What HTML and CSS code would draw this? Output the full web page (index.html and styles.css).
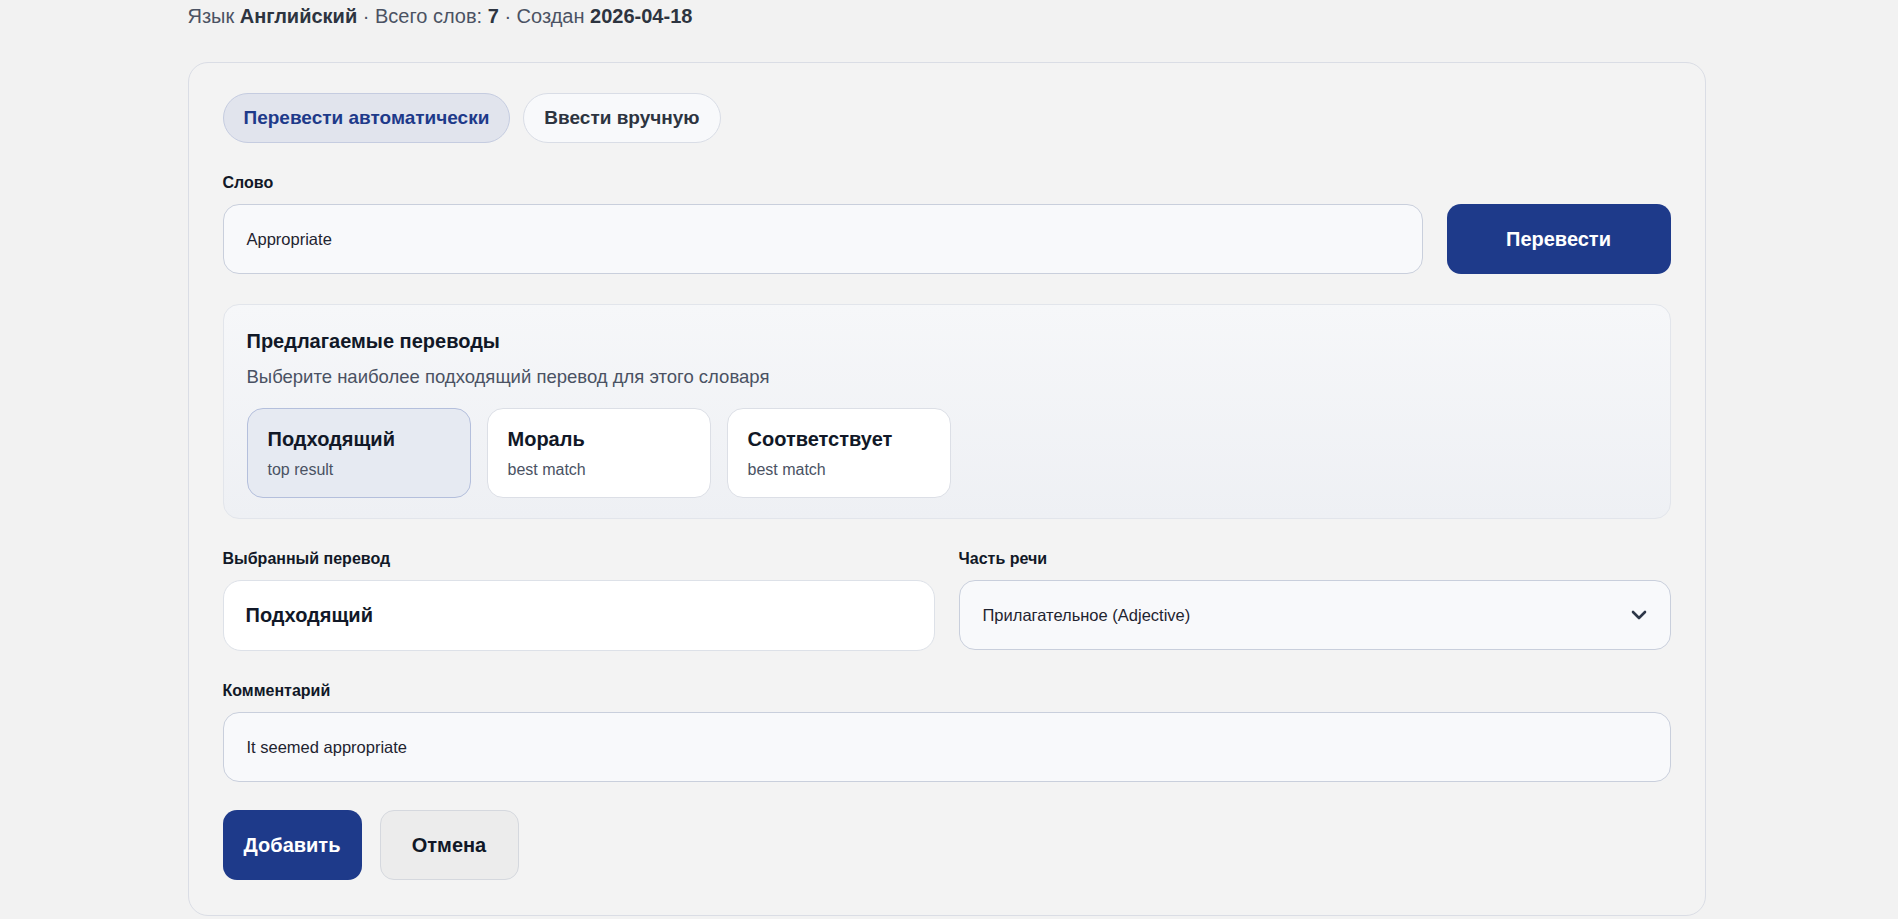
FILE: index.html
```html
<!DOCTYPE html>
<html>
	<head>
		<meta http-equiv="content-type" content="text/html; charset=utf-8" />

		<link rel="stylesheet" href="styles.css">
	</head>

	<body>
		<div class="page">
			<p class="dict-meta">
				Язык <b>Английский</b> · Всего слов: <b>7</b> · Создан <b>2026-04-18</b>
			</p>

			<form class="word-card">
				<div class="mode-tabs">
					<button type="button" class="mode-tab active">Перевести автоматически</button>
					<button type="button" class="mode-tab">Ввести вручную</button>
				</div>

				<div class="field">
					<label class="field-label">Слово</label>
					<div class="word-row">
						<div class="text-input word-input">Appropriate</div>
						<button type="button" class="btn btn-primary btn-translate">Перевести</button>
					</div>
				</div>

				<div class="suggestions">
					<h3 class="suggestions-title">Предлагаемые переводы</h3>
					<p class="suggestions-hint">Выберите наиболее подходящий перевод для этого словаря</p>
					<div class="suggestion-list">
						<div class="suggestion selected">
							<div class="suggestion-word">Подходящий</div>
							<div class="suggestion-note">top result</div>
						</div>
						<div class="suggestion">
							<div class="suggestion-word">Мораль</div>
							<div class="suggestion-note">best match</div>
						</div>
						<div class="suggestion">
							<div class="suggestion-word">Соответствует</div>
							<div class="suggestion-note">best match</div>
						</div>
					</div>
				</div>

				<div class="field-row">
					<div class="field">
						<label class="field-label">Выбранный перевод</label>
						<div class="chosen-input">Подходящий</div>
					</div>
					<div class="field">
						<label class="field-label">Часть речи</label>
						<div class="text-input select-input">
							<span>Прилагательное (Adjective)</span>
							<svg class="chevron" width="16" height="10" viewBox="0 0 16 10">
								<polyline points="2,2 8,8 14,2" fill="none" stroke="#2d3748" stroke-width="2.6" stroke-linecap="round" stroke-linejoin="round" />
							</svg>
						</div>
					</div>
				</div>

				<div class="field">
					<label class="field-label">Комментарий</label>
					<div class="text-input">It seemed appropriate</div>
				</div>

				<div class="form-actions">
					<button type="button" class="btn btn-primary">Добавить</button>
					<button type="button" class="btn btn-secondary">Отмена</button>
				</div>
			</form>
		</div>
	</body>
</html>
```

FILE: styles.css
```css
body {
	margin: 0;
	padding-right: 5px;
	background: #f2f2f2;
	font-family: "Liberation Sans", Arial, sans-serif;
	color: #111827;
}

.page {
	max-width: 1518px;
	margin: 0 auto;
}

.dict-meta {
	margin: 0;
	padding-top: 2px;
	font-size: 20px;
	line-height: 28px;
	color: #4b5263;
}

.dict-meta b {
	color: #2d3440;
}

.word-card {
	margin-top: 32px;
	padding: 30px 34px 35px;
	border: 1px solid #dadde5;
	border-radius: 20px;
	background: #f3f3f3;
	display: flex;
	flex-direction: column;
	gap: 30px;
}

.mode-tabs {
	display: flex;
	gap: 13px;
}

.mode-tab {
	height: 50px;
	padding: 0 20px;
	border: 1px solid #d9dde6;
	border-radius: 25px;
	background: #f8f9fb;
	font-family: inherit;
	font-size: 19px;
	font-weight: bold;
	color: #2d3440;
}

.mode-tab.active {
	background: #e1e4ed;
	border-color: #c5cce0;
	color: #1e3a8a;
}

.field {
	display: flex;
	flex-direction: column;
}

.field-label {
	font-size: 16px;
	line-height: 19px;
	font-weight: bold;
	margin-bottom: 12px;
}

.word-row {
	display: flex;
	gap: 24px;
}

.text-input {
	height: 70px;
	box-sizing: border-box;
	padding: 0 23px;
	border: 1px solid #c9cfdc;
	border-radius: 16px;
	background: #f8f9fb;
	display: flex;
	align-items: center;
	font-size: 16.5px;
	color: #1f2430;
}

.word-input {
	flex: 1;
}

.btn {
	height: 70px;
	width: 139px;
	padding: 0;
	border: 1px solid transparent;
	border-radius: 14px;
	font-family: inherit;
	font-size: 20px;
	font-weight: bold;
}

.btn-primary {
	background: #1e3a8a;
	color: #ffffff;
}

.btn-secondary {
	background: #ececec;
	border-color: #d5d8de;
	color: #111827;
}

.btn-translate {
	width: 224px;
}

.suggestions {
	padding: 25px 23px 20px;
	border: 1px solid #e2e5eb;
	border-radius: 16px;
	background: linear-gradient(#f6f7f9, #eef0f4);
}

.suggestions-title {
	margin: 0;
	font-size: 20px;
	line-height: 22px;
}

.suggestions-hint {
	margin: 14px 0 0;
	font-size: 18.5px;
	line-height: 22px;
	color: #4a5263;
}

.suggestion-list {
	display: flex;
	gap: 16px;
	margin-top: 20px;
}

.suggestion {
	width: 224px;
	box-sizing: border-box;
	padding: 19px 20px 17px;
	border: 1px solid #dcdfe6;
	border-radius: 16px;
	background: #ffffff;
}

.suggestion.selected {
	background: #e6eaf2;
	border-color: #b4bfdc;
}

.suggestion-word {
	font-size: 20px;
	line-height: 22px;
	font-weight: bold;
}

.suggestion-note {
	margin-top: 10px;
	font-size: 16px;
	line-height: 20px;
	color: #4a5263;
}

.field-row {
	display: grid;
	grid-template-columns: 1fr 1fr;
	gap: 24px;
}

.chosen-input {
	height: 71px;
	box-sizing: border-box;
	padding: 0 22px;
	border: 1px solid #dde1e8;
	border-radius: 18px;
	background: #ffffff;
	display: flex;
	align-items: center;
	font-size: 20px;
	font-weight: bold;
}

.select-input {
	justify-content: space-between;
	padding-right: 23px;
}

.form-actions {
	display: flex;
	gap: 18px;
	margin-top: -2px;
}
```
